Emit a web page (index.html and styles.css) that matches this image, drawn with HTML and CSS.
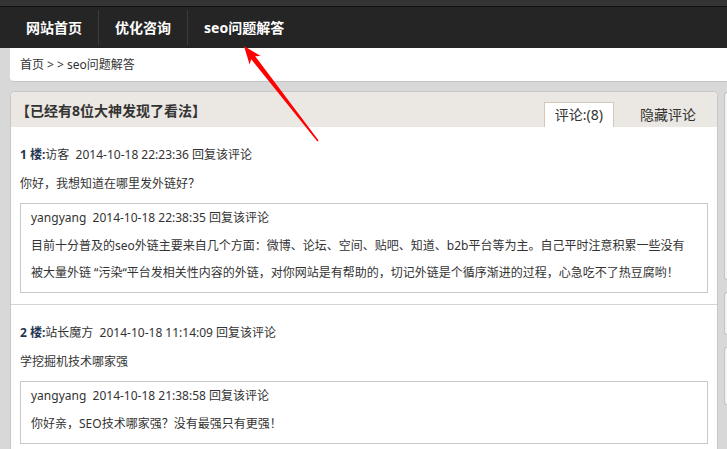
FILE: index.html
```html
<!DOCTYPE html>
<html lang="zh-CN">
<head>
    <meta charset="UTF-8">
    <title>seo问题解答</title>
    <link rel="stylesheet" href="styles.css">
</head>
<body>
    <div class="topbar"></div>
    <div class="nav">
        <a class="nav-item" href="#">网站首页</a>
        <a class="nav-item" href="#">优化咨询</a>
        <a class="nav-item nav-last" href="#">seo问题解答</a>
    </div>

    <div class="crumb">首页 &gt; &gt; seo问题解答</div>

    <div class="wrap">
        <div class="main">
            <div class="comments">
                <div class="comments-head">
                    <span class="comments-title">【已经有8位大神发现了看法】</span>
                    <div class="tabs">
                        <span class="tab tab-active">评论:(8)</span>
                        <span class="tab">隐藏评论</span>
                    </div>
                </div>

                <div class="comment">
                    <div class="meta"><b>1 楼:</b>访客&nbsp; 2014-10-18 22:23:36 <a href="#">回复该评论</a></div>
                    <p class="text">你好，我想知道在哪里发外链好？</p>
                    <div class="reply">
                        <div class="meta">yangyang&nbsp; 2014-10-18 22:38:35 <a href="#">回复该评论</a></div>
                        <p class="reply-text">目前十分普及的seo外链主要来自几个方面：微博、论坛、空间、贴吧、知道、b2b平台等为主。自己平时注意积累一些没有被大量外链 “污染“平台发相关性内容的外链，对你网站是有帮助的，切记外链是个循序渐进的过程，心急吃不了热豆腐哟！</p>
                    </div>
                </div>

                <div class="comment">
                    <div class="meta"><b>2 楼:</b>站长魔方&nbsp; 2014-10-18 11:14:09 <a href="#">回复该评论</a></div>
                    <p class="text">学挖掘机技术哪家强</p>
                    <div class="reply">
                        <div class="meta">yangyang&nbsp; 2014-10-18 21:38:58 <a href="#">回复该评论</a></div>
                        <p class="reply-text">你好亲，SEO技术哪家强？没有最强只有更强！</p>
                    </div>
                </div>
            </div>
        </div>

        <div class="side">
            <div class="side-box side-tall"></div>
            <div class="side-box side-small"></div>
            <div class="side-box side-mid"></div>
        </div>
    </div>

    <!-- 红色箭头标注 -->
    <svg class="arrow" width="727" height="449" viewBox="0 0 727 449">
        <polygon fill="#ff0000" points="244,46 260.6,55.9 255.2,56.3 318.6,140.6 317.4,141.4 251.2,59.3 249.6,64.5"/>
    </svg>
</body>
</html>
```

FILE: styles.css
```css
html {
    overflow: hidden;
}
body {
    margin: 0;
    height: 449px;
    background: #d8d8d8;
    font-family: "Noto Sans", "Noto Sans CJK SC", sans-serif;
    font-size: 12px;
    color: #333;
    position: relative;
    overflow: hidden;
}
a {
    color: #333;
    text-decoration: none;
}
.topbar {
    height: 6px;
    background: #343434;
    border-bottom: 1px solid #111;
}
.nav {
    height: 41px;
    background: #252525;
    display: flex;
    align-items: center;
    padding-left: 10px;
}
.nav-item {
    color: #fff;
    font-size: 14px;
    font-weight: bold;
    padding: 0 16px;
    line-height: 35px;
    border-right: 1px solid #3b3b3b;
}
.nav-last {
    border-right: none;
}
.crumb {
    margin-left: 10px;
    height: 33px;
    line-height: 33px;
    padding-left: 10px;
    background: #fff;
    border-bottom: 1px solid #c4c4c4;
    border-bottom-left-radius: 4px;
}
.wrap {
    display: flex;
    gap: 6px;
    padding: 9px 0 0 10px;
}
.main {
    flex: 0 0 708px;
}
.comments {
    background: #fff;
    border: 1px solid #c8c8c8;
    border-radius: 5px 5px 0 0;
}
.comments-head {
    height: 35px;
    background: #ebe7e2;
    display: flex;
    justify-content: space-between;
    align-items: flex-end;
    padding-left: 5px;
    border-radius: 5px 5px 0 0;
}
.comments-title {
    font-size: 14px;
    font-weight: bold;
    align-self: center;
}
.tabs {
    display: flex;
    gap: 15px;
    padding-right: 10px;
}
.tab {
    font-size: 14px;
    height: 24px;
    line-height: 24px;
    padding: 0 10px;
    border: 1px solid transparent;
    border-bottom: none;
}
.tab-active {
    background: #fff;
    border-color: #d6c8b8;
}
.comment {
    padding: 15px 9px 11px;
    border-bottom: 1px solid #d4d4d4;
}
.meta {
    line-height: 26px;
}
.meta b {
    color: #1f3552;
}
.text {
    margin: 3px 0 0;
    line-height: 26px;
}
.reply {
    margin-top: 6px;
    border: 1px solid #c8c8c8;
    padding: 1px 18px 6px 10px;
}
.reply-text {
    margin: 1px 0 0;
    line-height: 27px;
}
.side {
    flex: 1 1 auto;
    min-width: 0;
    display: flex;
    flex-direction: column;
    gap: 12px;
    padding-top: 1px;
}
.side-box {
    background: #f2f2f2;
    border: 1px solid #c4c4c4;
    border-right: none;
    border-radius: 4px 0 0 4px;
}
.side-tall {
    height: 186px;
}
.side-small {
    height: 41px;
}
.side-mid {
    height: 56px;
}
.arrow {
    position: absolute;
    top: 0;
    left: 0;
    pointer-events: none;
}
```
